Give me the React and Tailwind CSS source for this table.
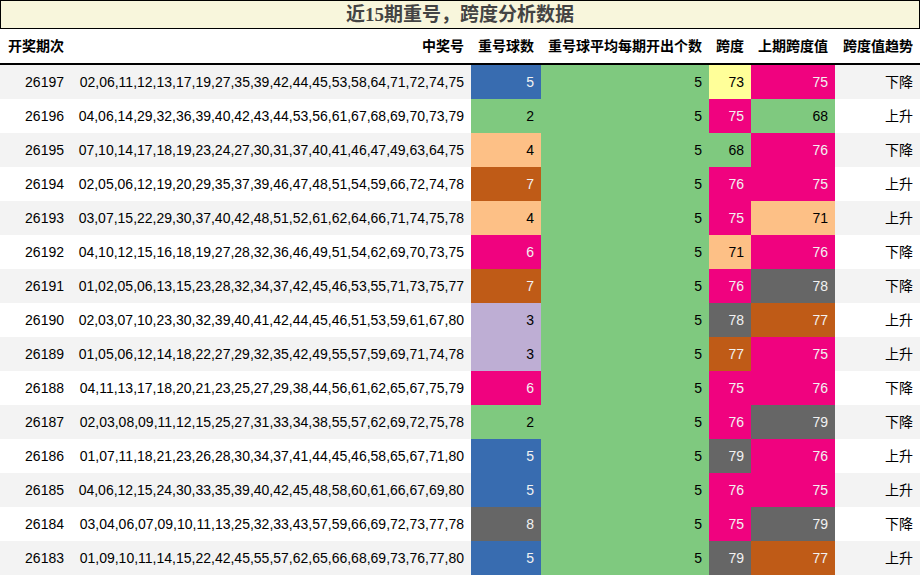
import React from "react";

const rows = [
  ["26197", "02,06,11,12,13,17,19,27,35,39,42,44,45,53,58,64,71,72,74,75", 5, 73, 75, "下降"],
  ["26196", "04,06,14,29,32,36,39,40,42,43,44,53,56,61,67,68,69,70,73,79", 2, 75, 68, "上升"],
  ["26195", "07,10,14,17,18,19,23,24,27,30,31,37,40,41,46,47,49,63,64,75", 4, 68, 76, "下降"],
  ["26194", "02,05,06,12,19,20,29,35,37,39,46,47,48,51,54,59,66,72,74,78", 7, 76, 75, "上升"],
  ["26193", "03,07,15,22,29,30,37,40,42,48,51,52,61,62,64,66,71,74,75,78", 4, 75, 71, "上升"],
  ["26192", "04,10,12,15,16,18,19,27,28,32,36,46,49,51,54,62,69,70,73,75", 6, 71, 76, "下降"],
  ["26191", "01,02,05,06,13,15,23,28,32,34,37,42,45,46,53,55,71,73,75,77", 7, 76, 78, "下降"],
  ["26190", "02,03,07,10,23,30,32,39,40,41,42,44,45,46,51,53,59,61,67,80", 3, 78, 77, "上升"],
  ["26189", "01,05,06,12,14,18,22,27,29,32,35,42,49,55,57,59,69,71,74,78", 3, 77, 75, "上升"],
  ["26188", "04,11,13,17,18,20,21,23,25,27,29,38,44,56,61,62,65,67,75,79", 6, 75, 76, "下降"],
  ["26187", "02,03,08,09,11,12,15,25,27,31,33,34,38,55,57,62,69,72,75,78", 2, 76, 79, "下降"],
  ["26186", "01,07,11,18,21,23,26,28,30,34,37,41,44,45,46,58,65,67,71,80", 5, 79, 76, "上升"],
  ["26185", "04,06,12,15,24,30,33,35,39,40,42,45,48,58,60,61,66,67,69,80", 5, 76, 75, "上升"],
  ["26184", "03,04,06,07,09,10,11,13,25,32,33,43,57,59,66,69,72,73,77,78", 8, 75, 79, "下降"],
  ["26183", "01,09,10,11,14,15,22,42,45,55,57,62,65,66,68,69,73,76,77,80", 5, 79, 77, "上升"],
];

const GREEN = "bg-[#7fc97f] text-black";
const PURPLE = "bg-[#beaed4] text-black";
const ORANGE = "bg-[#fdc086] text-black";
const YELLOW = "bg-[#ffff99] text-black";
const BLUE = "bg-[#386cb0] text-[#f2f2f2]";
const PINK = "bg-[#f0027f] text-[#f2f2f2]";
const BROWN = "bg-[#bf5b17] text-[#f2f2f2]";
const GRAY = "bg-[#666666] text-[#f2f2f2]";

const countColor = {
  2: GREEN,
  3: PURPLE,
  4: ORANGE,
  5: BLUE,
  6: PINK,
  7: BROWN,
  8: GRAY,
};

const spanColor = {
  68: GREEN,
  71: ORANGE,
  73: YELLOW,
  75: PINK,
  76: PINK,
  77: BROWN,
  78: GRAY,
  79: GRAY,
};

const grid =
  "grid grid-cols-[71px_400px_70px_168px_42px_84px_85px]";
const cell = "flex items-center justify-end pr-[7px] whitespace-nowrap";

export default function App() {
  return (
    <div
      className="w-[920px] h-[576px] bg-white overflow-hidden text-[14px] text-black"
      style={{ fontFamily: '"Liberation Sans", Arial, "Noto Sans CJK SC", sans-serif' }}
    >
      <div className="h-[29px] border border-black bg-[#f8f6dc] flex items-center justify-center">
        <span
          className="text-[19px] font-bold text-[#444444] leading-none"
          style={{ fontFamily: '"Liberation Serif", "Noto Sans CJK SC", serif' }}
        >
          近15期重号，跨度分析数据
        </span>
      </div>
      <div className={`${grid} h-[36px] border-b-2 border-black font-bold`}>
        <div className={cell}>开奖期次</div>
        <div className={cell}>中奖号</div>
        <div className={cell}>重号球数</div>
        <div className={cell}>重号球平均每期开出个数</div>
        <div className={cell}>跨度</div>
        <div className={cell}>上期跨度值</div>
        <div className={cell}>跨度值趋势</div>
      </div>
      {rows.map((r, i) => (
        <div
          key={r[0]}
          className={`${grid} h-[34px] ${i % 2 === 0 ? "bg-[#f3f3f3]" : "bg-white"}`}
        >
          <div className={cell}>{r[0]}</div>
          <div className={cell}>{r[1]}</div>
          <div className={`${cell} ${countColor[r[2]]}`}>{r[2]}</div>
          <div className={`${cell} ${GREEN}`}>5</div>
          <div className={`${cell} ${spanColor[r[3]]}`}>{r[3]}</div>
          <div className={`${cell} ${spanColor[r[4]]}`}>{r[4]}</div>
          <div className={cell}>{r[5]}</div>
        </div>
      ))}
    </div>
  );
}
